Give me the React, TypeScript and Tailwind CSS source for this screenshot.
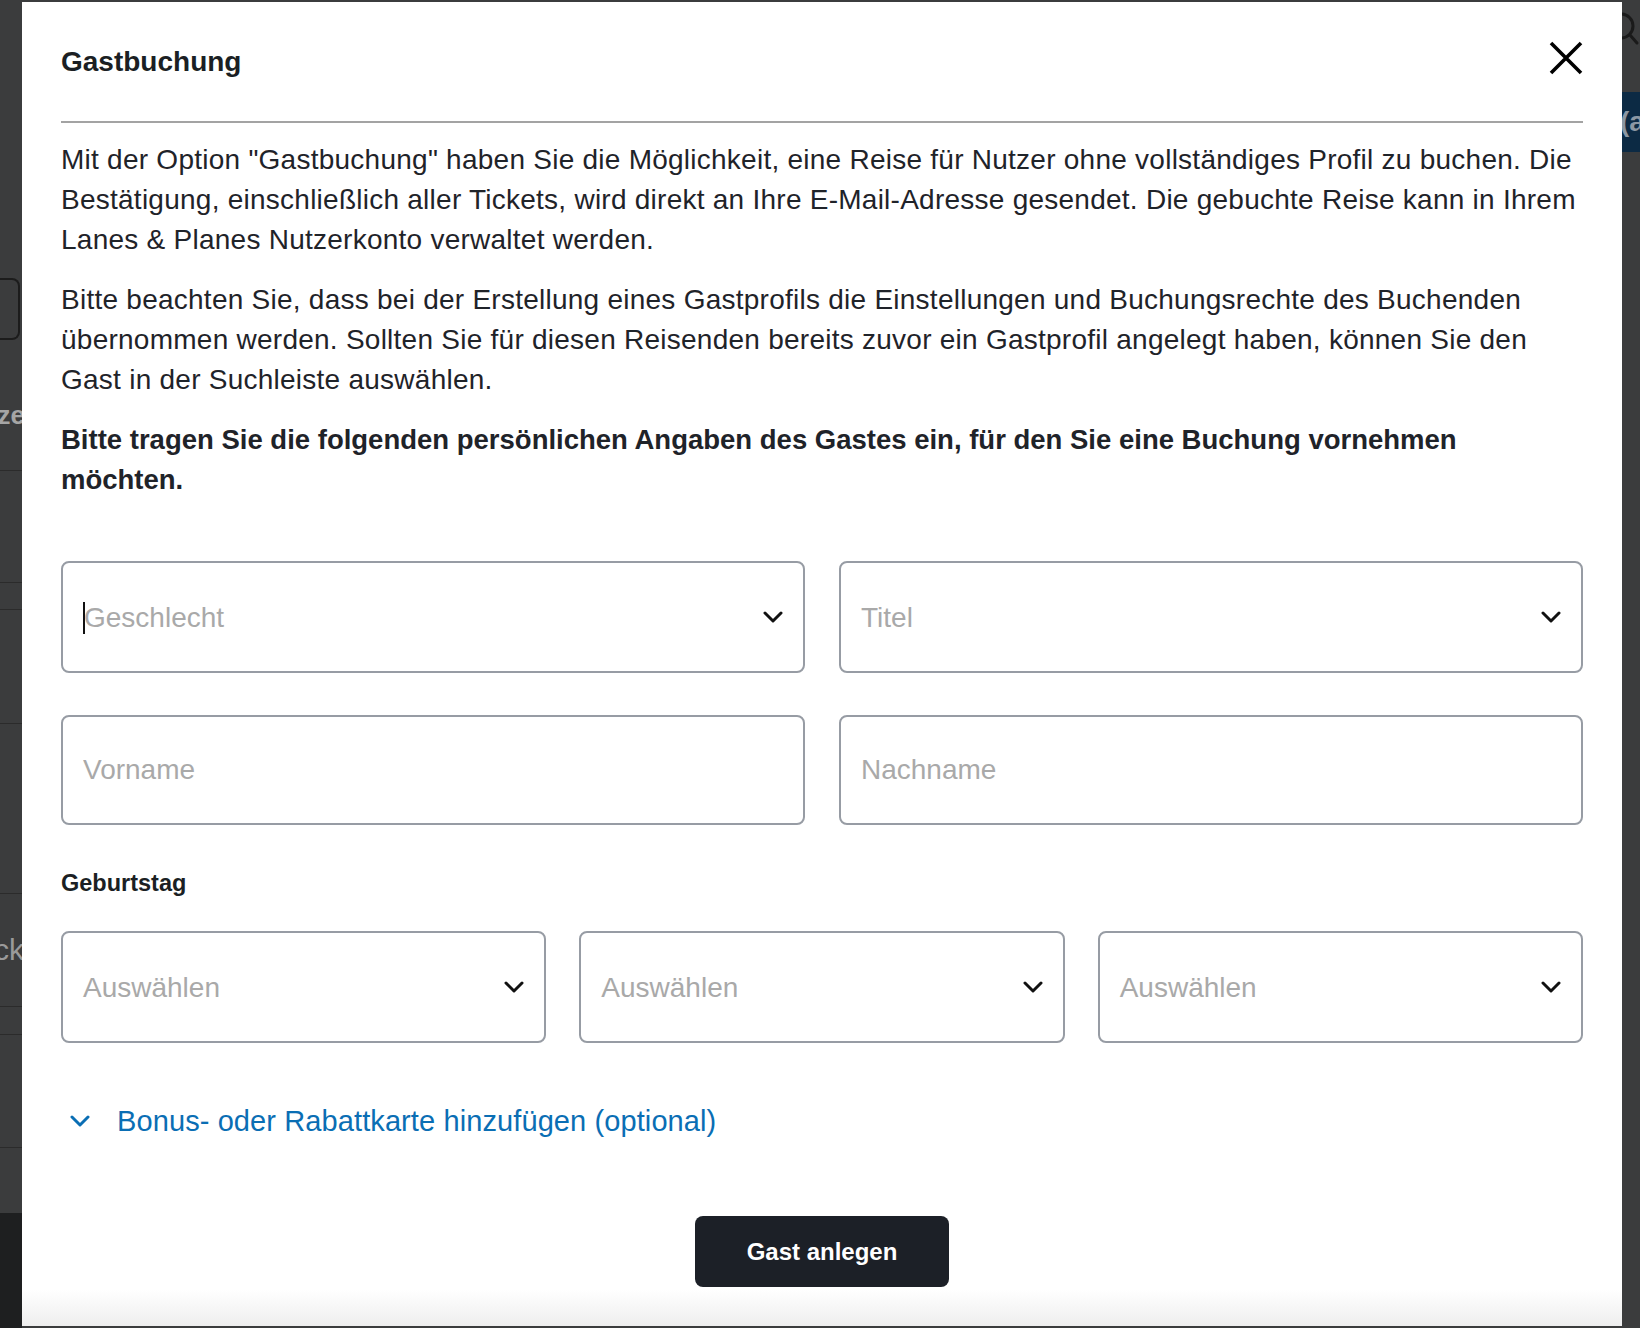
import React from "react";

const Chevron = ({ className }: { className?: string }) => (
  <svg width="20" height="12" viewBox="0 0 20 12" fill="none" className={className}>
    <path d="M2 2l8 8 8-8" stroke="currentColor" strokeWidth="3" strokeLinecap="round" strokeLinejoin="round" />
  </svg>
);

const SelectBox = ({ label, h, cursor }: { label: string; h: string; cursor?: boolean }) => (
  <div className={`${h} flex items-center justify-between rounded-[8px] border-2 border-[#979ca4] bg-white pl-[20px] pr-[20px]`}>
    <span className="mt-[2px] flex items-center text-[28px] leading-[34px] text-[#a9a9a9]">
      {cursor && <span className="mr-[-1px] inline-block h-[32px] w-[2px] bg-[#111]" />}
      {label}
    </span>
    <Chevron className="text-[#111]" />
  </div>
);

const TextBox = ({ label }: { label: string }) => (
  <input
    placeholder={label}
    className="h-[110px] w-full rounded-[8px] border-2 border-[#979ca4] bg-white pl-[20px] text-[28px] text-[#1f2329] outline-none placeholder:text-[#a9a9a9]"
  />
);

export default function App() {
  return (
    <div className="flex h-[1328px] w-[1640px] overflow-hidden bg-[#3b3c3d] font-['Liberation_Sans',Arial,sans-serif]">
      {/* left strip of the page behind */}
      <div className="flex w-[22px] shrink-0 flex-col overflow-hidden">
        <div className="h-[278px] shrink-0" />
        <div className="h-[62px] w-[20px] shrink-0 rounded-r-[8px] border-2 border-l-0 border-[#1c1c1c]" />
        <div className="h-[60px] shrink-0" />
        <div className="flex h-[30px] shrink-0 justify-end overflow-hidden whitespace-nowrap text-[26px] font-bold leading-[30px] text-[#a5a5a5]">
          <span className="-mr-[3px]">ze</span>
        </div>
        <div className="h-[41px] shrink-0 border-b border-[#2b2b2b]" />
        <div className="h-[112px] shrink-0 border-b border-[#2b2b2b]" />
        <div className="h-[27px] shrink-0 border-b border-[#2b2b2b]" />
        <div className="h-[114px] shrink-0 border-b border-[#2b2b2b]" />
        <div className="h-[170px] shrink-0 border-b border-[#2b2b2b]" />
        <div className="h-[40px] shrink-0" />
        <div className="flex h-[32px] shrink-0 justify-end overflow-hidden whitespace-nowrap text-[30px] leading-[32px] text-[#9a9a9a]">
          <span className="-mr-[2px]">ck</span>
        </div>
        <div className="h-[41px] shrink-0 border-b border-[#2b2b2b]" />
        <div className="h-[28px] shrink-0 border-b border-[#2b2b2b]" />
        <div className="h-[113px] shrink-0 border-b border-[#2b2b2b]" />
        <div className="h-[65px] shrink-0" />
        <div className="flex-1 bg-[#1e1f20]" />
      </div>

      {/* modal */}
      <div className="mt-[2px] flex h-[1324px] w-[1600px] shrink-0 flex-col bg-white text-[#1f2329]">
        <div className="flex flex-1 flex-col px-[39px]">
          <div className="flex h-[121px] shrink-0 items-center justify-between border-b-2 border-[#a3a3a3]">
            <h2 className="text-[28px] font-bold leading-[34px] text-[#1b1f24]">Gastbuchung</h2>
            <svg width="34" height="34" viewBox="0 0 34 34" className="mb-[7px]">
              <path d="M2 2L32 32M32 2L2 32" stroke="#000" strokeWidth="3.6" />
            </svg>
          </div>

          <p className="mt-[17px] text-[28px] leading-[40px] tracking-[0.25px]">
            Mit der Option "Gastbuchung" haben Sie die Möglichkeit, eine Reise für Nutzer ohne vollständiges Profil zu buchen. Die<br />
            Bestätigung, einschließlich aller Tickets, wird direkt an Ihre E-Mail-Adresse gesendet. Die gebuchte Reise kann in Ihrem<br />
            Lanes &amp; Planes Nutzerkonto verwaltet werden.
          </p>
          <p className="mt-[20px] text-[28px] leading-[40px] tracking-[0.25px]">
            Bitte beachten Sie, dass bei der Erstellung eines Gastprofils die Einstellungen und Buchungsrechte des Buchenden<br />
            übernommen werden. Sollten Sie für diesen Reisenden bereits zuvor ein Gastprofil angelegt haben, können Sie den<br />
            Gast in der Suchleiste auswählen.
          </p>
          <p className="mt-[20px] text-[27.5px] font-bold leading-[40px]">
            Bitte tragen Sie die folgenden persönlichen Angaben des Gastes ein, für den Sie eine Buchung vornehmen<br />
            möchten.
          </p>

          <div className="mt-[61px] grid grid-cols-2 gap-x-[34px]">
            <SelectBox label="Geschlecht" h="h-[112px]" cursor />
            <SelectBox label="Titel" h="h-[112px]" />
          </div>
          <div className="mt-[42px] grid grid-cols-2 gap-x-[34px]">
            <TextBox label="Vorname" />
            <TextBox label="Nachname" />
          </div>

          <div className="mt-[43px] text-[23.5px] font-bold leading-[30px] text-[#1b1f24]">Geburtstag</div>
          <div className="mt-[33px] grid grid-cols-3 gap-x-[33px]">
            <SelectBox label="Auswählen" h="h-[112px]" />
            <SelectBox label="Auswählen" h="h-[112px]" />
            <SelectBox label="Auswählen" h="h-[112px]" />
          </div>

          <button className="mt-[58px] flex items-center gap-[27px] self-start pl-[9px] text-[29px] leading-[40px] tracking-[0.1px] text-[#0a6eb4]">
            <Chevron />
            <span>Bonus- oder Rabattkarte hinzufügen (optional)</span>
          </button>

          <button className="mt-[75px] h-[71px] w-[254px] self-center rounded-[8px] bg-[#1c2027] text-[24px] font-bold text-white">
            Gast anlegen
          </button>
        </div>
        <div className="h-[36px] shrink-0 bg-gradient-to-b from-white to-[#eeeeee]" />
      </div>

      {/* right strip of the page behind */}
      <div className="flex w-[18px] shrink-0 flex-col overflow-hidden">
        <div className="h-[92px] shrink-0">
          <svg width="18" height="60" viewBox="0 0 18 60" className="mt-[12px]">
            <circle cx="-1" cy="14" r="12" stroke="#1a1a1a" strokeWidth="3" fill="none" />
            <path d="M8 23L15 31" stroke="#1a1a1a" strokeWidth="3" strokeLinecap="round" />
          </svg>
        </div>
        <div className="flex h-[60px] shrink-0 items-center overflow-hidden whitespace-nowrap bg-[#0c2a44] text-[28px] font-bold text-[#8b97a3]">
          <span className="-ml-[2px]">(a</span>
        </div>
        <div className="flex-1" />
      </div>
    </div>
  );
}
